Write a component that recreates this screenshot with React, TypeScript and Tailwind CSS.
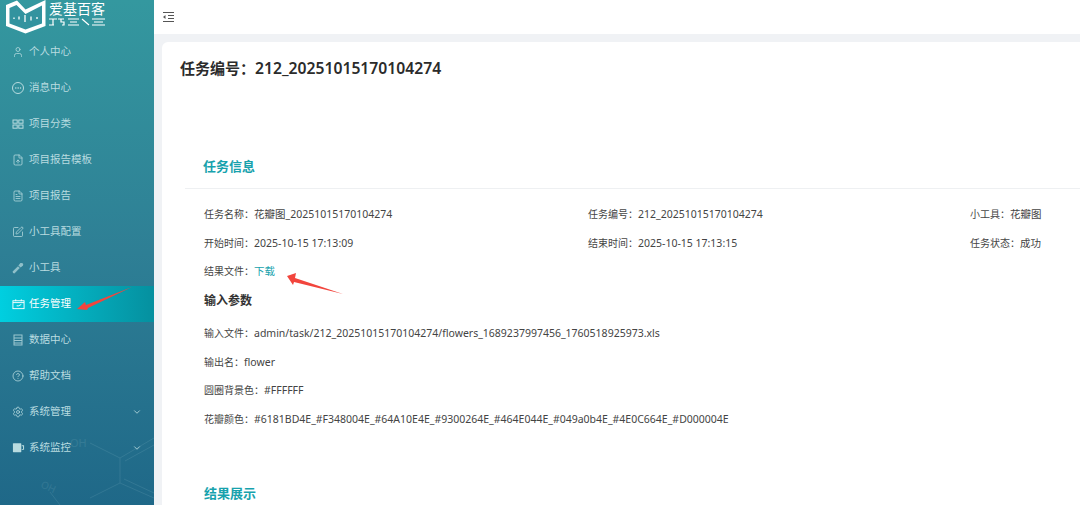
import React from "react";
import {
  ChevronDown,
  CircleHelp,
  Ellipsis,
  FileText,
  FileUp,
  Settings,
  SquarePen,
  User,
} from "lucide-react";

const Circle = () => (
  <span className="relative flex h-3 w-3 items-center justify-center rounded-full border border-current">
    <Ellipsis className="h-2 w-2" strokeWidth={2} />
  </span>
);

const GridIcon = () => (
  <svg viewBox="0 0 12 12" className="h-3 w-3" fill="none" stroke="currentColor" strokeWidth="1">
    <rect x="1" y="2" width="4.2" height="3.2" />
    <rect x="6.8" y="2" width="4.2" height="3.2" />
    <rect x="1" y="7" width="4.2" height="3.2" />
    <rect x="6.8" y="7" width="4.2" height="3.2" />
  </svg>
);

const TaskIcon = () => (
  <svg viewBox="0 0 14 12" className="h-3 w-[13px]" fill="none" stroke="currentColor" strokeWidth="1">
    <rect x="1" y="2.5" width="12" height="8.5" />
    <path d="M1 4.5h12M4 1v2M10 1v2M5 8h2l3-1.5" />
  </svg>
);

const ToolIcon = () => (
  <svg viewBox="0 0 12 12" className="h-3 w-3 opacity-70" fill="currentColor">
    <path d="M1 11 L0.6 9.6 L6 4.2 L7.8 6 L2.4 11.4 Z" />
    <path d="M6.4 3.4 L8.4 1 Q10.2 0.6 11 1.6 Q11.6 3 10.8 3.8 L8.6 5.6 Z" />
  </svg>
);

const DataIcon = () => (
  <svg viewBox="0 0 12 12" className="h-3 w-3 opacity-80" fill="none" stroke="currentColor" strokeWidth="1">
    <rect x="2" y="1" width="8" height="10" />
    <path d="M2 4h8M2 6.5h8M2 9h8" />
  </svg>
);

const MonitorIcon = () => (
  <svg viewBox="0 0 14 12" className="h-3 w-[13px]" fill="currentColor">
    <rect x="1" y="1" width="9" height="9.5" rx="0.5" />
    <path d="M10.5 3H13v5h-2.5V7h1.4V4h-1.4z" />
  </svg>
);

const menu = [
  { label: "个人中心", icon: <User className="h-3 w-3" strokeWidth={1.5} /> },
  { label: "消息中心", icon: <Circle /> },
  { label: "项目分类", icon: <GridIcon /> },
  { label: "项目报告模板", icon: <FileUp className="h-3 w-3" strokeWidth={1.5} /> },
  { label: "项目报告", icon: <FileText className="h-3 w-3" strokeWidth={1.5} /> },
  { label: "小工具配置", icon: <SquarePen className="h-3 w-3" strokeWidth={1.5} /> },
  { label: "小工具", icon: <ToolIcon /> },
  { label: "任务管理", icon: <TaskIcon />, active: true },
  { label: "数据中心", icon: <DataIcon /> },
  { label: "帮助文档", icon: <CircleHelp className="h-3 w-3" strokeWidth={1.5} /> },
  { label: "系统管理", icon: <Settings className="h-3 w-3" strokeWidth={1.5} />, arrow: true },
  { label: "系统监控", icon: <MonitorIcon />, arrow: true },
];

const Logo = () => (
  <div className="flex h-[34px] shrink-0 pl-[6px] text-white">
    <svg viewBox="0 0 40 34" className="h-[34px] w-[40px] shrink-0" fill="none">
      <path d="M0 5 L11 0.5 L19.5 9.5 L39.5 0 L39.5 26 L19.5 33.5 L0 26 Z" fill="#ffffff" />
      <path d="M3.5 8 L10.5 5 L19.5 14 L36 5.5 L36 23.5 L19.5 29.5 L3.5 23.5 Z" fill="#33939f" />
      <path d="M8 17.5v1.5M13 16.5v3M19 15v7M25 16.5v4M31 17v2" stroke="#ffffff" strokeWidth="1.3" />
    </svg>
    <div className="ml-[3px] flex flex-col pt-[2px]">
      <span className="text-[14px] leading-[14px] whitespace-nowrap">爱基百客</span>
      <svg viewBox="0 0 57 8" className="mt-[2px] h-[8px] w-[57px]" fill="none" stroke="#ffffff" strokeWidth="1.2">
        <path d="M0 1h8M4 1v6M0 7h5M9 1h6M12 1v3h3v3h-2M19 1h11M21 4h7M19 7h11M33 1l7 6M43 1h13M45 4h9M43 7h13" />
      </svg>
    </div>
  </div>
);

const SidebarBackdrop = () => (
  <svg className="absolute bottom-0 left-0 h-[120px] w-[154px] opacity-[0.1]" viewBox="0 0 154 120" fill="none" stroke="#cfeef2">
    <path d="M90 58 L120 73 L120 98 L90 113 M120 73 L154 53 M125 76 L154 60 M120 98 L154 113 M124 94 L154 108" />
    <path d="M50 107 L60 120" />
    <text x="70" y="62" fontSize="11" fill="#cfeef2" stroke="none">OH</text>
    <text x="40" y="102" fontSize="10" fill="#cfeef2" stroke="none" transform="rotate(25 40 102)">OH</text>
  </svg>
);

const Info = ({ label, value }: { label: string; value: React.ReactNode }) => (
  <p className="text-[10px] whitespace-nowrap">
    {label}：<span className="text-[10.5px]">{value}</span>
  </p>
);

export default function App() {
  return (
    <div
      className="relative flex h-[505px] w-[1080px] overflow-hidden bg-[#f0f2f5] text-[10.5px] text-[#444444]"
      style={{ fontFamily: '"Noto Sans", "Noto Sans CJK SC", sans-serif' }}
    >
      <aside className="relative flex w-[154px] shrink-0 flex-col bg-gradient-to-b from-[#34989f] via-[#2e7f95] to-[#1f6888] text-[#b9dce0]">
        <Logo />
        <SidebarBackdrop />
        <nav className="relative flex flex-col">
          {menu.map((item) => (
            <div
              key={item.label}
              className={
                item.active
                  ? "flex h-9 items-center bg-gradient-to-r from-[#00cfe0] to-[#05909f] pl-3 pr-3 text-white"
                  : "flex h-9 items-center pl-3 pr-3"
              }
            >
              <span className="flex w-[17px] shrink-0 items-center">{item.icon}</span>
              <span className="whitespace-nowrap">{item.label}</span>
              {item.arrow && <ChevronDown className="ml-auto h-[10px] w-[10px]" strokeWidth={2} />}
            </div>
          ))}
        </nav>
        <svg className="absolute top-[286px] left-[76px] h-[26px] w-[56px]" viewBox="0 0 56 26" fill="#f2453d">
          <polygon points="1,23 9,16 10,19 56,1 12,22 11,24" />
        </svg>
      </aside>

      <div className="flex min-w-0 flex-1 flex-col">
        <header className="flex h-[34px] shrink-0 items-center bg-white pl-[8px]">
          <svg viewBox="0 0 12 12" className="h-3 w-3" fill="none" stroke="#555555" strokeWidth="1">
            <path d="M1 1.5h11M6 4.5h6M6 7.5h6M1 10.5h11" />
            <path d="M3.5 4L1 6l2.5 2z" fill="#555555" stroke="none" />
          </svg>
        </header>

        <main className="ml-2 mt-2 flex-1 rounded-tl-[6px] bg-white pl-[18px]">
          <h1 className="mt-[15px] text-[15px] leading-[22px] font-semibold whitespace-nowrap text-[#2b2b2b]">
            任务编号：<span className="text-[15.7px]">212_20251015170104274</span>
          </h1>

          <div className="mt-[78px] ml-[5px]">
            <h2 className="pl-[18px] text-[13px] leading-[18px] font-semibold text-[#17a2ad]">任务信息</h2>
            <div className="mt-[13px] h-px bg-[#eef0f2]" />
          </div>

          <div className="pl-[24px]">
            <div className="mt-[17px] grid grid-cols-[384px_382px_1fr] gap-y-[12.5px] leading-[16px]">
              <Info label="任务名称" value="花瓣图_20251015170104274" />
              <Info label="任务编号" value="212_20251015170104274" />
              <Info label="小工具" value="花瓣图" />
              <Info label="开始时间" value="2025-10-15 17:13:09" />
              <Info label="结束时间" value="2025-10-15 17:13:15" />
              <Info label="任务状态" value="成功" />
              <Info label="结果文件" value={<span className="text-[#17a2ad]">下载</span>} />
            </div>

            <h3 className="mt-[13px] text-[12px] leading-[18px] font-semibold text-[#333333]">输入参数</h3>

            <div className="mt-[15px] flex flex-col gap-[12.5px] leading-[16px]">
              <Info label="输入文件" value="admin/task/212_20251015170104274/flowers_1689237997456_1760518925973.xls" />
              <Info label="输出名" value="flower" />
              <Info label="圆圈背景色" value="#FFFFFF" />
              <Info label="花瓣颜色" value="#6181BD4E_#F348004E_#64A10E4E_#9300264E_#464E044E_#049a0b4E_#4E0C664E_#D000004E" />
            </div>

            <h2 className="mt-[57px] text-[13px] leading-[18px] font-semibold text-[#17a2ad]">结果展示</h2>
          </div>
        </main>
      </div>

      <svg className="absolute top-[272px] left-[286px] h-[24px] w-[58px]" viewBox="0 0 58 24" fill="#f2453d">
        <polygon points="1,4 10,1 9,6 57,22 8,10 7,13" />
      </svg>
    </div>
  );
}
